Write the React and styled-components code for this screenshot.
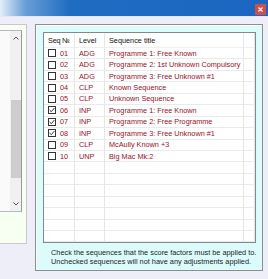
import React from "react";
import styled, { createGlobalStyle } from "styled-components";

const Global = createGlobalStyle`
  html, body { margin: 0; padding: 0; }
  body {
    width: 268px; height: 279px; overflow: hidden;
    background: #eeeef9;
    font-family: "Liberation Sans", Arial, sans-serif;
  }
`;

const Window = styled.div`
  width: 268px; height: 279px;
  display: flex; flex-direction: column;
  background: #eeeef9;
`;

const TitleBar = styled.div`
  height: 16px; flex: none;
  display: flex; justify-content: flex-end; align-items: flex-start;
  background: linear-gradient(90deg, #e4eef8 0px, #6a9fd8 25px, #1f6cc3 70px, #1a66c0 100%);
  border-bottom: 1px solid #dfe8f4;
`;

const CloseBtn = styled.div`
  width: 11px; height: 11px; margin: 4px 2px 0 0;
  background: #c9504c;
  display: flex; align-items: center; justify-content: center;
`;

const Body = styled.div`
  flex: 1;
  display: flex; align-items: flex-start;
  padding-top: 7px;
`;

const LeftGroup = styled.div`
  width: 26px; height: 218px; flex: none;
  border-right: 1px solid #c8c8cc;
  border-top: 1px solid #c8c8cc;
  border-bottom: 1px solid #c8c8cc;
  background: #f6fff2;
  display: flex; flex-direction: column;
`;

const LeftList = styled.div`
  width: 21px; height: 180px;
  margin-top: 5px;
  border-right: 1px solid #9a9a9a;
  border-top: 1px solid #b8b8b8;
  border-bottom: 1px solid #b8b8b8;
  background: #fafafa;
  display: flex;
`;

const LeftItems = styled.div`
  width: 10px;
`;

const ScrollBar = styled.div`
  width: 11px;
  display: flex; flex-direction: column; align-items: center;
  background: #f0f0f0;
`;

const Arrow = styled.div`
  height: 14px; display: flex; align-items: center; justify-content: center;
`;

const Thumb = styled.div`
  flex: none; width: 10px; height: ${p => p.$h}px; margin-top: ${p => p.$top}px;
  background: #cdcdcd;
`;

const Spacer = styled.div`
  flex: 1;
`;

const Panel = styled.div`
  margin-left: 8px;
  width: 228px; height: 247px; flex: none;
  border: 1px solid #8e8e8e;
  box-shadow: inset 1px 1px 0 #ffffff;
  background: #dcfcfc;
  padding: 7px 6px 0 7px;
  box-sizing: border-box;
  display: flex; flex-direction: column;
`;

const ListBox = styled.div`
  height: 211px;
  border: 1px solid #828790;
  background: #ffffff;
  box-sizing: border-box;
  overflow: hidden;
`;

const Grid = styled.div`
  display: grid;
  grid-template-columns: 31px 30px 139px 1fr;
`;

const HeadCell = styled.div`
  height: 15px;
  display: flex; align-items: center;
  padding-left: 4px;
  font-size: 7.3px; color: #111;
  letter-spacing: ${p => p.$tight ? "-0.2px" : "0"};
  border-right: 1px solid #e5e5e5;
  border-bottom: 1px solid #efefef;
  box-sizing: border-box;
  white-space: nowrap;
`;

const Cell = styled.div`
  height: 11.45px;
  display: flex; align-items: center; gap: 4px;
  padding-left: 4px;
  font-size: 7.3px; color: #9a1028;
  border-right: 1px solid #e5e5e5;
  border-bottom: 1px solid #eaeaea;
  box-sizing: border-box;
  white-space: nowrap;
  overflow: hidden;
`;

const Box = styled.span`
  width: 8px; height: 8px; flex: none;
  border: 1px solid #333;
  background: #fff;
  box-sizing: border-box;
  display: flex; align-items: center; justify-content: center;
`;

const Note = styled.div`
  padding: 5px 0 0 8px;
  font-size: 7.35px; line-height: 9px; color: #222;
  white-space: nowrap;
`;

const rows = [
  ["01", "ADG", "Programme 1: Free Known", false],
  ["02", "ADG", "Programme 2: 1st Unknown Compulsory", false],
  ["03", "ADG", "Programme 3: Free Unknown #1", false],
  ["04", "CLP", "Known Sequence", false],
  ["05", "CLP", "Unknown Sequence", false],
  ["06", "INP", "Programme 1: Free Known", true],
  ["07", "INP", "Programme 2: Free Programme", true],
  ["08", "INP", "Programme 3: Free Unknown #1", true],
  ["09", "CLP", "McAully Known +3", false],
  ["10", "UNP", "Big Mac Mk:2", false],
];

const Check = ({ on }) => (
  <Box>
    {on && (
      <svg width="6" height="6" viewBox="0 0 6 6">
        <path d="M0.6 3 L2.3 4.7 L5.4 1" fill="none" stroke="#222" strokeWidth="0.9" />
      </svg>
    )}
  </Box>
);

export default function App() {
  const empty = Array.from({ length: 7 });
  return (
    <Window>
      <Global />
      <TitleBar>
        <CloseBtn>
          <svg width="5" height="5" viewBox="0 0 5 5">
            <path d="M0.5 0.5 L4.5 4.5 M4.5 0.5 L0.5 4.5" stroke="#fff" strokeWidth="1.1" />
          </svg>
        </CloseBtn>
      </TitleBar>
      <Body>
        <LeftGroup>
          <LeftList>
            <LeftItems />
            <ScrollBar>
              <Arrow>
                <svg width="6" height="4" viewBox="0 0 6 4">
                  <path d="M0.5 3.5 L3 1 L5.5 3.5" fill="none" stroke="#555" strokeWidth="1" />
                </svg>
              </Arrow>
              <Thumb $top={55} $h={78} />
              <Spacer />
              <Arrow>
                <svg width="6" height="4" viewBox="0 0 6 4">
                  <path d="M0.5 0.5 L3 3 L5.5 0.5" fill="none" stroke="#555" strokeWidth="1" />
                </svg>
              </Arrow>
            </ScrollBar>
          </LeftList>
        </LeftGroup>
        <Panel>
          <ListBox>
            <Grid>
              <HeadCell $tight>Seq №</HeadCell>
              <HeadCell>Level</HeadCell>
              <HeadCell>Sequence title</HeadCell>
              <HeadCell />
              {rows.map(([n, l, t, c]) => (
                <React.Fragment key={n}>
                  <Cell><Check on={c} />{n}</Cell>
                  <Cell>{l}</Cell>
                  <Cell>{t}</Cell>
                  <Cell />
                </React.Fragment>
              ))}
              {empty.map((_, i) => (
                <React.Fragment key={i}>
                  <Cell /><Cell /><Cell /><Cell />
                </React.Fragment>
              ))}
            </Grid>
          </ListBox>
          <Note>
            Check the sequences that the score factors must be applied to.<br />
            Unchecked sequences will not have any adjustments applied.
          </Note>
        </Panel>
      </Body>
    </Window>
  );
}
